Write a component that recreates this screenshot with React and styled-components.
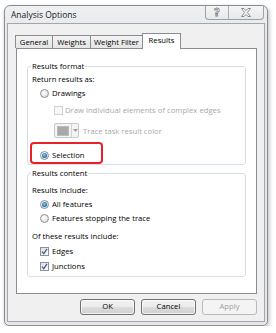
import React from "react";
import styled, { createGlobalStyle, css } from "styled-components";

const Global = createGlobalStyle`
  html, body { margin: 0; padding: 0; background: #ffffff; }
  body { font-family: "Open Sans", "Noto Sans", sans-serif; font-size: 7.7px; color: #000; }
  * { box-sizing: border-box; }
`;

const Window = styled.div`
  margin: 5px 0 0 4px;
  width: 264px;
  height: 321px;
  border: 1px solid #8a8d91;
  border-radius: 6px 6px 5px 5px;
  background: linear-gradient(#eef0f2, #e4e6e9 30px, #e4e6e9);
  box-shadow: 1px 2px 4px rgba(0, 0, 0, 0.28);
  display: flex;
  flex-direction: column;
`;

const TitleBar = styled.div`
  height: 17px;
  display: flex;
  align-items: flex-start;
  padding: 0 3px 0 6px;
`;

const Title = styled.div`
  flex: 1;
  line-height: 18px;
  font-size: 8.5px;
  color: #1a1a1a;
`;

const CaptionButtons = styled.div`
  display: flex;
  height: 14px;
  border: 1px solid #9ba1a8;
  border-top: none;
  border-radius: 0 0 4px 4px;
  background: linear-gradient(#f4f5f6, #e6e8ea);
  overflow: hidden;
`;

const CaptionButton = styled.div`
  width: ${(p) => p.$w}px;
  height: 100%;
  display: flex;
  align-items: center;
  justify-content: center;
  & + & { border-left: 1px solid #a9afb5; }
`;

const HelpGlyph = styled.span`
  font-family: "DejaVu Sans", sans-serif;
  font-weight: bold;
  font-size: 10px;
  line-height: 1;
  color: #f7f7f7;
  -webkit-text-stroke: 0.8px #7d8288;
`;

const Client = styled.div`
  flex: 1;
  margin: 0 2px 3px 2px;
  border: 1px solid #a3a7ac;
  background: #f0f0f0;
  display: flex;
  flex-direction: column;
  padding: 9px 7px 0 8px;
`;

const TabStrip = styled.div`
  display: flex;
  align-items: flex-end;
  height: 15px;
  margin-left: -1px;
  position: relative;
  z-index: 1;
`;

const Tab = styled.div`
  width: ${(p) => p.$w}px;
  height: 13px;
  line-height: 12px;
  border: 1px solid #898c95;
  border-bottom: none;
  margin-right: -1px;
  background: linear-gradient(#f3f3f3, #e5e5e5);
  color: #000;
  white-space: nowrap;
  text-align: center;
  ${(p) =>
    p.$active &&
    css`
      height: 16px;
      line-height: 12px;
      margin-bottom: -1px;
      background: #ffffff;
      position: relative;
      z-index: 2;
    `}
`;

const Panel = styled.div`
  height: 246px;
  border: 1px solid #898c95;
  background: #ffffff;
  padding: 17px 10px 0 10px;
  display: flex;
  flex-direction: column;
`;

const Group = styled.div`
  position: relative;
  border: 1px solid #d5dfe5;
  border-radius: 3px;
  padding: ${(p) => p.$pad};
  margin-top: ${(p) => p.$mt || 0}px;
  display: flex;
  flex-direction: column;
`;

const Legend = styled.span`
  position: absolute;
  top: -8px;
  left: 3px;
  padding: 0 1px;
  background: #ffffff;
  line-height: 14px;
`;

const Row = styled.div`
  display: flex;
  align-items: center;
  height: ${(p) => p.$h || 14}px;
  margin-top: ${(p) => p.$mt || 0}px;
  padding-left: ${(p) => p.$indent || 0}px;
  color: ${(p) => (p.$disabled ? "#a9a9a9" : "#000")};
  white-space: nowrap;
  position: relative;
`;

const Label = styled.span`
  margin-left: ${(p) => p.$gap || 0}px;
`;

const RadioCircle = styled.span`
  width: 9px;
  height: 9px;
  border-radius: 50%;
  border: 1px solid #8e9196;
  background: radial-gradient(circle at 40% 35%, #ffffff, #dcdde0 80%);
  display: flex;
  align-items: center;
  justify-content: center;
  flex: none;
  &::after {
    content: "";
    display: ${(p) => (p.$checked ? "block" : "none")};
    width: 5px;
    height: 5px;
    border-radius: 50%;
    background: radial-gradient(circle at 45% 40%, #8fd3f5, #2a7db5 55%, #14466e);
  }
`;

const CheckBox = styled.span`
  width: 9px;
  height: 9px;
  border: 1px solid ${(p) => (p.$disabled ? "#cfd1d3" : "#8e9196")};
  background: ${(p) =>
    p.$disabled ? "#f7f7f7" : "linear-gradient(135deg, #dfe0e2, #fafafa)"};
  display: flex;
  align-items: center;
  justify-content: center;
  flex: none;
`;

const ColorButton = styled.span`
  width: 25px;
  height: 15px;
  border: 1px solid #c6c8cb;
  border-radius: 2px;
  background: #f4f4f4;
  display: flex;
  align-items: center;
  padding-left: 2px;
  flex: none;
`;

const Swatch = styled.span`
  width: 12px;
  height: 10px;
  background: #a9a9a9;
  border: 1px solid #bcbcbc;
`;

const ArrowPart = styled.span`
  margin-left: 2px;
  height: 13px;
  flex: 1;
  border-left: 1px solid #d3d3d3;
  display: flex;
  align-items: center;
  justify-content: center;
`;

const Highlight = styled.div`
  position: absolute;
  left: -2px;
  top: -6px;
  width: 73px;
  height: 22px;
  border: 2px solid #e8202a;
  border-radius: 4px;
  pointer-events: none;
`;

const ButtonBar = styled.div`
  display: flex;
  justify-content: flex-end;
  gap: 6px;
  margin-top: 5px;
`;

const Button = styled.div`
  width: 55px;
  height: 16px;
  border: 1px solid ${(p) => (p.$disabled ? "#b7babd" : "#707070")};
  border-radius: 3px;
  background: ${(p) =>
    p.$disabled
      ? "#f4f4f4"
      : "linear-gradient(#f2f2f2 0%, #ebebeb 50%, #dddddd 51%, #cfcfcf 100%)"};
  color: ${(p) => (p.$disabled ? "#a0a0a0" : "#000")};
  display: flex;
  align-items: center;
  justify-content: center;
  line-height: 1;
  box-shadow: ${(p) => (p.$disabled ? "none" : "inset 0 0 0 1px rgba(255,255,255,0.7)")};
`;

const Radio = ({ checked, children, indent = 8, mt, highlight }) => (
  <Row $indent={indent} $mt={mt}>
    {highlight && <Highlight />}
    <RadioCircle $checked={checked} />
    <Label $gap={3}>{children}</Label>
  </Row>
);

const Check = ({ checked, disabled, children, indent = 8, mt, gap = 3 }) => (
  <Row $indent={indent} $mt={mt} $disabled={disabled}>
    <CheckBox $disabled={disabled}>
      {checked && (
        <svg width="7" height="7" viewBox="0 0 7 7">
          <path d="M1 3.6 L2.8 5.6 L6 0.8" fill="none" stroke="#4a5f97" strokeWidth="1.3" />
        </svg>
      )}
    </CheckBox>
    <Label $gap={gap}>{children}</Label>
  </Row>
);

export default function App() {
  return (
    <>
      <Global />
      <Window>
        <TitleBar>
          <Title>Analysis Options</Title>
          <CaptionButtons>
            <CaptionButton $w={22}>
              <HelpGlyph>?</HelpGlyph>
            </CaptionButton>
            <CaptionButton $w={35}>
              <svg width="10" height="9" viewBox="0 0 10 9">
                <path
                  d="M0.5 0.5 H3 L5 2.6 L7 0.5 H9.5 L6.4 4.5 L9.5 8.5 H7 L5 6.4 L3 8.5 H0.5 L3.6 4.5 Z"
                  fill="#f7f7f7"
                  stroke="#7d8288"
                  strokeWidth="0.9"
                  strokeLinejoin="round"
                />
              </svg>
            </CaptionButton>
          </CaptionButtons>
        </TitleBar>
        <Client>
          <TabStrip>
            <Tab $w={38}>General</Tab>
            <Tab $w={39}>Weights</Tab>
            <Tab $w={53}>Weight Filter</Tab>
            <Tab $w={39} $active>Results</Tab>
          </TabStrip>
          <Panel>
            <Group $pad="5px 0 2px 4px">
              <Legend>Results format</Legend>
              <Row>Return results as:</Row>
              <Radio>Drawings</Radio>
              <Check disabled indent={22} mt={3} gap={2}>
                Draw individual elements of complex edges
              </Check>
              <Row $indent={22} $mt={6} $h={15} $disabled>
                <ColorButton>
                  <Swatch />
                  <ArrowPart>
                    <svg width="5" height="3" viewBox="0 0 5 3">
                      <path d="M0 0 H5 L2.5 3 Z" fill="#9a9a9a" />
                    </svg>
                  </ArrowPart>
                </ColorButton>
                <Label $gap={4}>Trace task result color</Label>
              </Row>
              <Radio checked mt={10} highlight>
                Selection
              </Radio>
            </Group>
            <Group $pad="9px 0 3px 4px" $mt={8}>
              <Legend>Results content</Legend>
              <Row>Results include:</Row>
              <Radio checked>All features</Radio>
              <Radio>Features stopping the trace</Radio>
              <Row $mt={4}>Of these results include:</Row>
              <Check checked mt={1}>Edges</Check>
              <Check checked mt={1}>Junctions</Check>
            </Group>
          </Panel>
          <ButtonBar>
            <Button>OK</Button>
            <Button>Cancel</Button>
            <Button $disabled>Apply</Button>
          </ButtonBar>
        </Client>
      </Window>
    </>
  );
}
